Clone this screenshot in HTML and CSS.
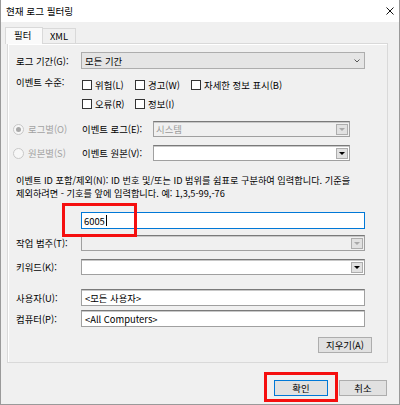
FILE: index.html
```html
<!DOCTYPE html>
<html lang="ko">
<head>
    <meta charset="UTF-8">
    <meta name="viewport" content="width=device-width, initial-scale=1.0">
    <title>현재 로그 필터링</title>
    <link rel="stylesheet" href="styles.css">
</head>
<body>

    <div class="window">
        <div class="titlebar">
            <span class="title">현재 로그 필터링</span>
            <svg class="close" width="8" height="8" viewBox="0 0 8 8">
                <path d="M0.5 0.5L7.5 7.5M7.5 0.5L0.5 7.5" stroke="#111" stroke-width="1" fill="none"/>
            </svg>
        </div>

        <div class="tabs">
            <div class="tab active">필터</div>
            <div class="tab">XML</div>
        </div>

        <div class="panel">
            <div class="row row-period">
                <span class="lbl">로그 기간(G):</span>
                <div class="select">
                    <span>모든 기간</span>
                    <svg width="6" height="4" viewBox="0 0 6 4">
                        <polyline points="0.5,0.5 3,3 5.5,0.5" stroke="#555" stroke-width="1" fill="none"/>
                    </svg>
                </div>
            </div>

            <div class="row row-level">
                <span class="lbl lbl-level">이벤트 수준:</span>
                <div class="checks">
                    <span class="check"><i class="box"></i>위험(L)</span>
                    <span class="check"><i class="box"></i>경고(W)</span>
                    <span class="check"><i class="box"></i>자세한 정보 표시(B)</span>
                    <span class="check"><i class="box"></i>오류(R)</span>
                    <span class="check"><i class="box"></i>정보(I)</span>
                </div>
            </div>

            <div class="row row-radio first">
                <span class="radio-opt"><i class="radio on"></i>로그별(O)</span>
                <span class="sub-lbl">이벤트 로그(E):</span>
                <div class="combo disabled small">
                    <span class="val">시스템</span>
                    <span class="drop"><i class="tri"></i></span>
                </div>
            </div>

            <div class="row row-radio">
                <span class="radio-opt"><i class="radio"></i>원본별(S)</span>
                <span class="sub-lbl">이벤트 원본(V):</span>
                <div class="combo small">
                    <span class="val"></span>
                    <span class="drop"><i class="tri"></i></span>
                </div>
            </div>

            <p class="desc">이벤트 ID 포함/제외(N): ID 번호 및/또는 ID 범위를 쉼표로 구분하여 입력합니다. 기준을<br>제외하려면 - 기호를 앞에 입력합니다. 예: 1,3,5-99,-76</p>

            <div class="row row-id">
                <span class="lbl"></span>
                <div class="input focus">6005<i class="caret"></i></div>
                <div class="mark mark-id"></div>
            </div>

            <div class="row row-task">
                <span class="lbl">작업 범주(T):</span>
                <div class="combo disabled wide">
                    <span class="val"></span>
                    <span class="drop"><i class="tri"></i></span>
                </div>
            </div>

            <div class="row row-keyword">
                <span class="lbl">키워드(K):</span>
                <div class="combo wide">
                    <span class="val"></span>
                    <span class="drop"><i class="tri"></i></span>
                </div>
            </div>

            <div class="row row-user">
                <span class="lbl">사용자(U):</span>
                <div class="input">&lt;모든 사용자&gt;</div>
            </div>

            <div class="row row-computer">
                <span class="lbl">컴퓨터(P):</span>
                <div class="input">&lt;All Computers&gt;</div>
            </div>

            <div class="clear-row">
                <button class="btn btn-clear">지우기(A)</button>
            </div>
        </div>

        <div class="footer">
            <div class="mark-ok">
                <button class="btn btn-ok">확인</button>
            </div>
            <button class="btn btn-cancel">취소</button>
        </div>
    </div>

</body>
</html>
```

FILE: styles.css
```css
body {
    margin: 0;
    background: #f0f0f0;
}

.window {
    width: 400px;
    height: 405px;
    box-sizing: border-box;
    border: 1px solid #9a9a9a;
    border-top: none;
    background: #f0f0f0;
    font-family: "Noto Sans CJK KR", "Noto Sans", sans-serif;
    font-size: 9.4px;
    line-height: 12px;
    color: #000;
}

/* title bar */
.titlebar {
    height: 22px;
    background: #fff;
    display: flex;
    align-items: center;
    justify-content: space-between;
    padding: 0 5px 0 5px;
}

.title {
    font-size: 9.6px;
}

.close {
    display: block;
}

/* tabs */
.tabs {
    display: flex;
    align-items: flex-end;
    height: 16px;
    margin: 5px 0 0 4px;
}

.tab {
    box-sizing: border-box;
    height: 15px;
    padding: 0 9px;
    border: 1px solid #d9d9d9;
    border-bottom: none;
    background: #f0f0f0;
    line-height: 14px;
}

.tab.active {
    position: relative;
    z-index: 1;
    width: 38px;
    height: 17px;
    margin-bottom: -1px;
    padding: 0 0 0 8px;
    background: #fafafa;
}

.tab + .tab {
    width: 33px;
    padding: 0 0 0 7px;
    border-left: none;
}

/* panel */
.panel {
    height: 320px;
    box-sizing: border-box;
    margin: 0 11px 0 6px;
    padding: 0 15px 0 8px;
    border: 1px solid #d9d9d9;
    box-shadow: inset 1px 1px 0 #fff;
}

.row {
    display: flex;
    align-items: center;
    margin-right: 7px;
    position: relative;
}

.lbl {
    width: 65px;
    flex: none;
    white-space: nowrap;
}

.row-period {
    margin-top: 8px;
}

.select {
    flex: 1;
    height: 17px;
    box-sizing: border-box;
    border: 1px solid #adadad;
    background: #e5e5e5;
    display: flex;
    align-items: center;
    justify-content: space-between;
    padding: 0 4px 0 3px;
}

.select svg {
    display: block;
}

/* level checkboxes */
.row-level {
    align-items: flex-start;
    margin-top: 6px;
}

.lbl-level {
    line-height: 15px;
}

.checks {
    display: grid;
    grid-template-columns: 53px 56px auto;
    grid-auto-rows: 19px;
    align-items: center;
}

.check {
    display: flex;
    align-items: center;
    white-space: nowrap;
}

.box {
    width: 10px;
    height: 10px;
    box-sizing: border-box;
    border: 1px solid #333;
    background: #fff;
    margin: 0 3px 0 1px;
}

/* radio rows */
.row-radio {
    height: 16px;
    margin-top: 8px;
}

.radio-opt {
    width: 69px;
    margin-left: -3px;
    display: flex;
    align-items: center;
    color: #a2a2a2;
    white-space: nowrap;
}

.radio {
    position: relative;
    width: 11px;
    height: 11px;
    box-sizing: border-box;
    border: 1px solid #c8c8c8;
    border-radius: 50%;
    background: #f7f7f7;
    margin-right: 4px;
}

.radio.on::after {
    content: "";
    position: absolute;
    left: 2px;
    top: 2px;
    width: 5px;
    height: 5px;
    border-radius: 50%;
    background: #a8a8a8;
}

.sub-lbl {
    width: 71px;
    white-space: nowrap;
}

/* old style combo boxes and inputs */
.combo,
.input {
    height: 16px;
    box-sizing: border-box;
    border: 1px solid #a0a0a0;
    border-top-color: #7a7a7a;
    box-shadow: inset 0 1px 0 #c8c8c8;
    background: #fff;
    display: flex;
    align-items: center;
}

.combo.small {
    width: 197px;
    flex: none;
}

.combo.wide {
    flex: 1;
}

.combo.disabled {
    background: #f0f0f0;
    color: #9a9a9a;
}

.val {
    padding-left: 2px;
}

.drop {
    margin-left: auto;
    margin-right: 1px;
    width: 12px;
    height: 11px;
    box-sizing: border-box;
    border: 1px solid #adadad;
    background: #e1e1e1;
    display: flex;
    align-items: center;
    justify-content: center;
}

.tri {
    width: 0;
    height: 0;
    border-left: 3px solid transparent;
    border-right: 3px solid transparent;
    border-top: 3px solid #000;
}

.disabled .tri {
    border-top-color: #a8a8a8;
}

.input {
    flex: 1;
    height: 17px;
    padding-left: 3px;
    white-space: nowrap;
}

.input.focus {
    border: 1px solid #0078d7;
    box-shadow: none;
    padding-left: 2px;
}

.caret {
    display: inline-block;
    width: 1px;
    height: 11px;
    background: #000;
    margin-left: 1px;
}

/* description */
.desc {
    margin: 13px 0 0 0;
    font-size: 9.2px;
    line-height: 13px;
    white-space: nowrap;
}

.row-id {
    margin-top: 12px;
}

.row-task {
    margin-top: 6px;
}

.row-keyword {
    margin-top: 8px;
}

.row-user {
    margin-top: 14px;
}

.row-computer {
    margin-top: 4px;
}

/* red annotation boxes */
.mark {
    position: absolute;
    z-index: 2;
    box-sizing: border-box;
    border: 3px solid #f50f0f;
}

.mark-id {
    left: 46px;
    top: -9px;
    width: 75px;
    height: 34px;
}

/* buttons */
.clear-row {
    display: flex;
    justify-content: flex-end;
    margin-top: 10px;
}

.btn {
    height: 16px;
    box-sizing: border-box;
    border: 1px solid #adadad;
    background: #e1e1e1;
    font: inherit;
    color: #000;
    padding: 0;
    line-height: 12px;
}

.btn-clear {
    width: 54px;
}

.footer {
    display: flex;
    justify-content: flex-end;
    align-items: flex-start;
    padding-right: 12px;
    margin-top: 9px;
}

.mark-ok {
    box-sizing: border-box;
    border: 3px solid #f50f0f;
    padding: 5px 7px 3px 7px;
}

.btn-ok {
    display: block;
    width: 54px;
    border-color: #0078d7;
}

.btn-cancel {
    width: 48px;
    margin: 8px 0 0 1px;
}
```
